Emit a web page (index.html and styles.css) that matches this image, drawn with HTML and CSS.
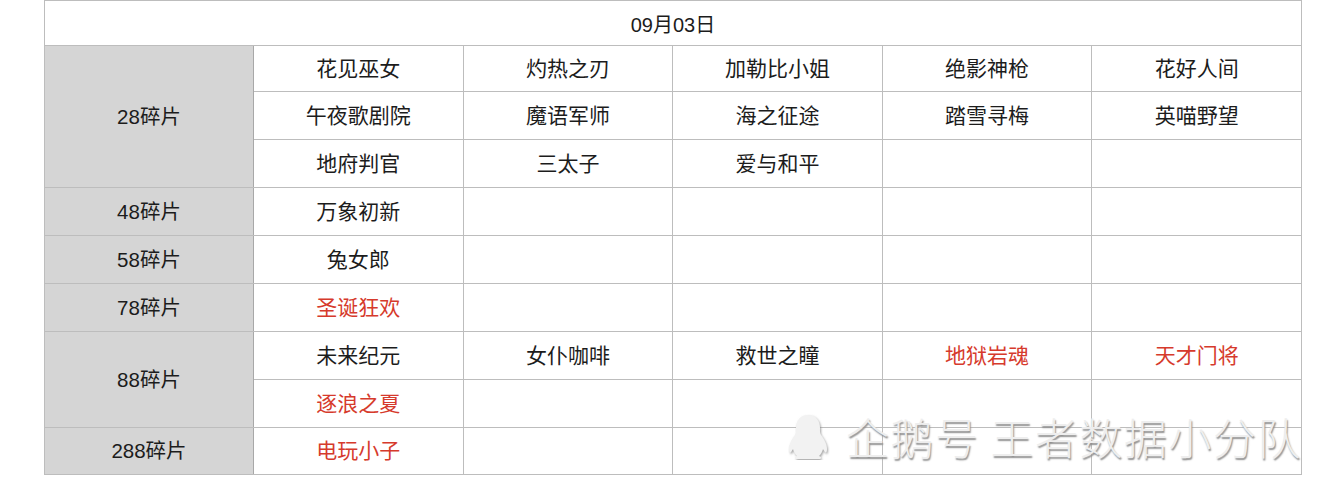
FILE: index.html
```html
<!DOCTYPE html>
<html lang="zh-CN">
<head>
<meta charset="utf-8">
<title>碎片</title>
<link rel="stylesheet" href="styles.css">
</head>
<body>
<div class="page">
  <table class="grid">
    <colgroup>
      <col class="c-label"><col class="c"><col class="c"><col class="c"><col class="c"><col class="c">
    </colgroup>
    <tr class="head"><td colspan="6">09月03日</td></tr>
    <tr class="first"><td class="label" rowspan="3">28碎片</td><td>花见巫女</td><td>灼热之刃</td><td>加勒比小姐</td><td>绝影神枪</td><td>花好人间</td></tr>
    <tr><td>午夜歌剧院</td><td>魔语军师</td><td>海之征途</td><td>踏雪寻梅</td><td>英喵野望</td></tr>
    <tr><td>地府判官</td><td>三太子</td><td>爱与和平</td><td></td><td></td></tr>
    <tr><td class="label">48碎片</td><td>万象初新</td><td></td><td></td><td></td><td></td></tr>
    <tr><td class="label">58碎片</td><td>兔女郎</td><td></td><td></td><td></td><td></td></tr>
    <tr><td class="label">78碎片</td><td class="red">圣诞狂欢</td><td></td><td></td><td></td><td></td></tr>
    <tr><td class="label" rowspan="2">88碎片</td><td>未来纪元</td><td>女仆咖啡</td><td>救世之瞳</td><td class="red">地狱岩魂</td><td class="red">天才门将</td></tr>
    <tr><td class="red">逐浪之夏</td><td></td><td></td><td></td><td></td></tr>
    <tr class="last"><td class="label">288碎片</td><td class="red">电玩小子</td><td></td><td></td><td></td><td></td></tr>
  </table>
  <div class="watermark">
    <svg class="penguin" viewBox="0 0 46 48" width="46" height="48">
      <defs>
        <filter id="sh" x="-20%" y="-20%" width="150%" height="150%">
          <feDropShadow dx="1" dy="1.5" stdDeviation="1" flood-color="#8a8a8a" flood-opacity="0.8"/>
        </filter>
      </defs>
      <path filter="url(#sh)" fill="#f2f2f2" d="M23 3c-8 0-12 6-12 13 0 3 .3 5-1 7-3 4-6 9-6 14 0 3 1 4 2 3l2-3c1 3 2 5 4 7-2 1-3 2-1 3h24c2-1 1-2-1-3 2-2 3-4 4-7l2 3c1 1 2 0 2-3 0-5-3-10-6-14-1.300-2-1-4-1-7 0-7-4-13-12-13z"/>
    </svg>
    <span class="wm-text">企鹅号 王者数据小分队</span>
  </div>
</div>
</body>
</html>
```
FILE: styles.css
```css
html, body {
  margin: 0;
  padding: 0;
  background: #ffffff;
}
body {
  font-family: "Liberation Sans", "Noto Sans CJK SC", sans-serif;
  color: #1c1c1c;
  width: 1334px;
  height: 483px;
  overflow: hidden;
}
.page {
  position: relative;
  padding-left: 44px;
  height: 483px;
}
.grid {
  border-collapse: collapse;
  table-layout: fixed;
  width: 1257px;
}
.c-label { width: 209px; }
.c { width: 209.6px; }
.grid td {
  border: 1px solid #bdbdbd;
  text-align: center;
  vertical-align: middle;
  padding: 0;
  height: 47px;
  font-size: 21px;
  line-height: 24px;
}
.grid tr.first td {
  height: 45px;
}
.grid tr.last td {
  height: 46px;
}
.grid tr.head td {
  height: 41px;
  font-size: 20px;
  padding-top: 3px;
}
.grid td.label {
  background: #d5d5d5;
  font-size: 20.5px;
  border-right-color: #a8a8a8;
}
.grid td.red {
  color: #d63a2c;
}
.watermark {
  position: absolute;
  left: 785px;
  top: 411px;
  display: flex;
  align-items: center;
  gap: 15px;
}
.penguin {
  display: block;
}
.wm-text {
  font-family: "Noto Sans CJK SC", sans-serif;
  font-weight: 300;
  font-size: 43px;
  line-height: 50px;
  color: #eeeeee;
  letter-spacing: 1.5px;
  text-shadow: 1px 1.5px 1.5px #8f8f8f;
  white-space: nowrap;
}
```
